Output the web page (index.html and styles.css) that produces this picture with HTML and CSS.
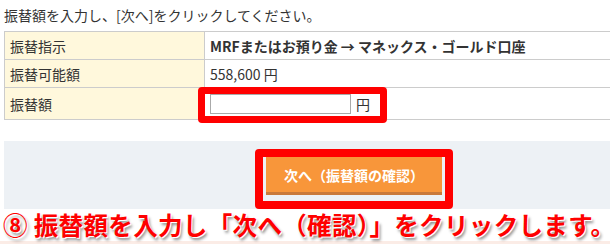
FILE: index.html
```html
<!DOCTYPE html>
<html lang="ja">
<head>
<meta charset="utf-8">
<link rel="stylesheet" href="styles.css">
</head>
<body>
<div class="page">
  <p class="intro">振替額を入力し、[次へ]をクリックしてください。</p>
  <table class="form">
    <tr>
      <th>振替指示</th>
      <td class="strong">MRFまたはお預り金 → マネックス・ゴールド口座</td>
    </tr>
    <tr>
      <th>振替可能額</th>
      <td>558,600 円</td>
    </tr>
    <tr class="input-row">
      <th>振替額</th>
      <td><input class="amount" type="text"><span class="unit">円</span></td>
    </tr>
  </table>
  <div class="panel">
    <button class="next" type="button">次へ（振替額の確認）</button>
  </div>
  <p class="note">⑧ 振替額を入力し「次へ（確認）」をクリックします。</p>
  <div class="foot"></div>
  <div class="mark mark-input"></div>
  <div class="mark mark-button"></div>
</div>
</body>
</html>
```

FILE: styles.css
```css
html, body {
  margin: 0;
  padding: 0;
  background: #fff;
}
body {
  width: 610px;
  height: 248px;
  overflow: hidden;
  font-family: "Noto Sans CJK JP", "Noto Sans", sans-serif;
  color: #333;
}
.page {
  position: relative;
  padding-left: 4px;
  width: 606px;
}
.intro {
  margin: 0;
  padding-top: 5px;
  height: 31px;
  box-sizing: border-box;
  font-size: 14px;
  line-height: 20px;
}
.form {
  border-collapse: collapse;
  width: 610px;
  font-size: 14px;
  line-height: 18px;
}
.form th, .form td {
  border: 1px solid #cccccc;
  padding: 5px 5px 4px;
  text-align: left;
  font-weight: normal;
  height: 18px;
}
.form th {
  width: 189px;
  background: #fff8dc;
}
.form td.strong {
  font-weight: bold;
}
.input-row th, .input-row td {
  padding-top: 5px;
  padding-bottom: 5px;
  height: 20px;
}
.amount {
  width: 141px;
  height: 20px;
  box-sizing: border-box;
  border: 1px solid #aaaaaa;
  margin: 0;
  padding: 0 3px;
  vertical-align: middle;
}
.unit {
  margin-left: 5px;
  vertical-align: middle;
}
.panel {
  margin-top: 21px;
  height: 68px;
  box-sizing: border-box;
  padding: 15px 0 0 262px;
  background: #edf1f5;
  width: 610px;
}
.next {
  width: 176px;
  height: 39px;
  margin: 0;
  padding: 0;
  border: 0;
  border-bottom: 3px solid #c9793a;
  background: #f8963a;
  color: #fff;
  font-family: "Noto Sans CJK JP", sans-serif;
  font-weight: bold;
  font-size: 14px;
  line-height: 20px;
  box-sizing: border-box;
  padding-top: 2px;
}
.note {
  margin: 0 0 0 -1px;
  height: 32px;
  font-size: 24.5px;
  line-height: 32px;
  font-weight: bold;
  color: #ff0000;
  letter-spacing: 0.35px;
  white-space: nowrap;
  text-shadow: 1px 1px 0 #fff, 2px 3px 3px rgba(0, 0, 0, 0.45);
}
.foot {
  margin-left: -4px;
  height: 3px;
  background: #fbece6;
}
.mark {
  position: absolute;
  border: 7px solid #ff0000;
  border-radius: 4px;
  box-sizing: border-box;
}
.mark-input {
  left: 198px;
  top: 87px;
  width: 189px;
  height: 36px;
}
.mark-button {
  left: 255px;
  top: 149px;
  width: 198px;
  height: 60px;
  border-width: 8px;
}
```
